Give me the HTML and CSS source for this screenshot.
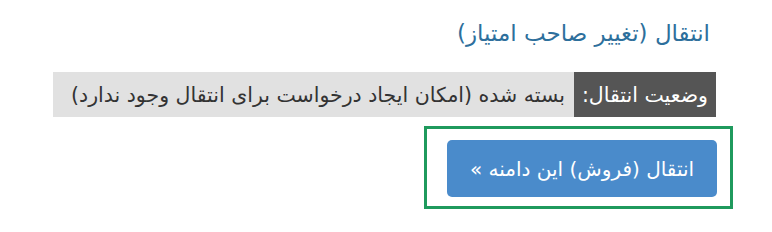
FILE: index.html
```html
<!DOCTYPE html>
<html lang="fa" dir="rtl">
<head>
    <meta charset="UTF-8">
    <meta name="viewport" content="width=device-width, initial-scale=1.0">
    <title>انتقال</title>
    <link rel="stylesheet" href="styles.css">
</head>
<body>
    <div class="page">
        <h3 class="title">انتقال (تغییر صاحب امتیاز)</h3>
        <div class="status">
            <span class="status-label">وضعیت انتقال:</span>
            <span class="status-value">بسته شده (امکان ایجاد درخواست برای انتقال وجود ندارد)</span>
        </div>
        <div class="highlight">
            <button type="button" class="btn">انتقال (فروش) این دامنه &raquo;</button>
        </div>
    </div>
</body>
</html>
```

FILE: styles.css
```css
*{
    margin: 0;
    padding: 0;
    box-sizing: border-box;
}
body{
    font-family: "DejaVu Sans", sans-serif;
    background-color: #fff;
    direction: rtl;
}
.page{
    display: flex;
    flex-direction: column;
    align-items: flex-start;
    padding: 18px 56px 0 53px;
}
.title{
    font-weight: normal;
    font-size: 23px;
    color: #2d6f9c;
    margin-right: 6px;
    height: 36px;
    line-height: 30px;
}
.status{
    display: flex;
    width: 100%;
    height: 45px;
    margin-top: 18px;
    background-color: #e1e1e1;
    font-size: 20.5px;
}
.status-label{
    display: flex;
    align-items: center;
    padding: 0 8px;
    background-color: #555;
    color: #fff;
}
.status-value{
    display: flex;
    align-items: center;
    padding: 0 9px;
    color: #333;
}
.highlight{
    margin-top: 9px;
    margin-right: -17px;
    padding: 11px 13px 9px 20px;
    border: 3px solid #1f9a5d;
}
.btn{
    width: 270px;
    height: 57px;
    border: none;
    border-radius: 5px;
    background-color: #4a8bcb;
    color: #fff;
    font-family: "DejaVu Sans", sans-serif;
    font-size: 20px;
}
```
